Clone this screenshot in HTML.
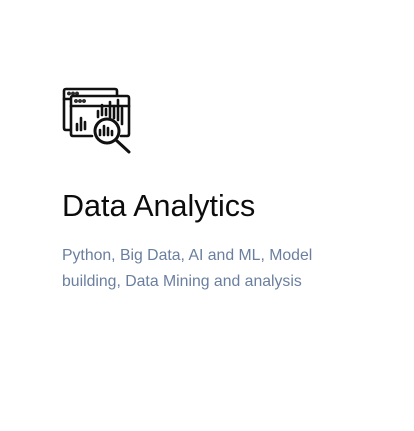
<!DOCTYPE html>
<html><head><meta charset="utf-8"><style>
html,body{margin:0;padding:0;background:#fff;width:414px;height:431px;overflow:hidden}
.t{position:absolute;left:62px;top:187px;font-family:"Liberation Sans",sans-serif;font-size:30.5px;color:#0c0c0c;letter-spacing:0;margin:0;font-weight:normal;line-height:38px}
.d{position:absolute;left:62px;top:243px;font-family:"Liberation Sans",sans-serif;font-size:15.8px;color:#6a7f9f;line-height:26px;width:262px}
svg{position:absolute;left:0;top:0}
</style></head><body>
<svg width="414" height="431" fill="none" stroke="#111" stroke-width="2.6" stroke-linecap="round" stroke-linejoin="round">
<path d="M70 130 H66 Q64 130 64 128 V91 Q64 89 66 89 H115 Q117 89 117 91 V95"/>
<path d="M64 99 H70"/>
<circle cx="69" cy="93.5" r="0.6" fill="#111"/><circle cx="73" cy="93.5" r="0.6" fill="#111"/><circle cx="77" cy="93.5" r="0.6" fill="#111"/>
<path d="M92 136 H73 Q71 136 71 134 V98 Q71 96 73 96 H127 Q129 96 129 98 V134 Q129 136 127 136 H121"/>
<path d="M71 106 H129"/>
<circle cx="76" cy="101" r="0.6" fill="#111"/><circle cx="80" cy="101" r="0.6" fill="#111"/><circle cx="84" cy="101" r="0.6" fill="#111"/>
<path d="M77 124 V130 M81 118 V130 M85 122 V129 M98 111 V117 M102 105 V115 M106 109 V115 M110 102 V117 M114 106 V118 M118 100 V120 M122 108 V124"/>
<circle cx="107" cy="131" r="12" stroke-width="3"/>
<path d="M100 135 V130 M104 135 V126 M108 135 V128 M112 135 V131"/>
<path d="M116 140 L129 152" stroke-width="3"/>
</svg>
<h1 class="t">Data Analytics</h1>
<div class="d">Python, Big Data, AI and ML, Model building, Data Mining and analysis</div>
</body></html>
